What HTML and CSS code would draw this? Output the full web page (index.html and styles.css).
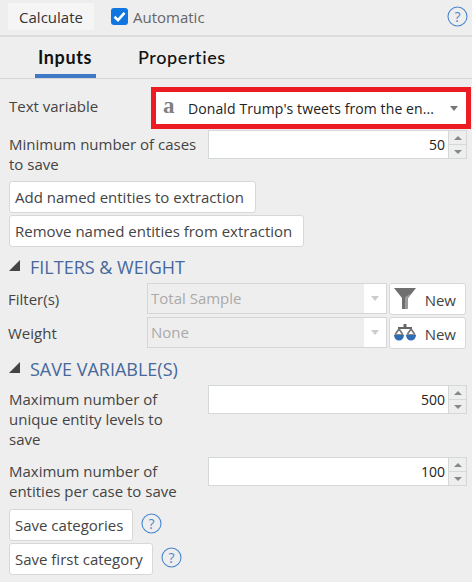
FILE: index.html
```html
<!DOCTYPE html>
<html lang="en">
<head>
    <meta charset="UTF-8">
    <title>Text Analysis Inputs</title>
    <link rel="stylesheet" href="styles.css">
</head>
<body>
    <!-- Top toolbar -->
    <div class="toolbar">
        <button class="calc">Calculate</button>
        <span class="check">
            <svg width="17" height="17" viewBox="0 0 17 17"><rect width="17" height="17" rx="3" fill="#0f75e0"/><path d="M3.5 8.8 L7 12.2 L13.5 4.8" fill="none" stroke="#fff" stroke-width="2.6"/></svg>
        </span>
        <span class="auto">Automatic</span>
        <svg class="help top-help" width="21" height="21" viewBox="0 0 21 21"><circle cx="10.5" cy="10.5" r="9.5" fill="none" stroke="#4a86d0" stroke-width="1.1"/><text x="10.5" y="15.5" class="help-mark">?</text></svg>
    </div>

    <!-- Tabs -->
    <div class="tabs">
        <div class="tab active">Inputs</div>
        <div class="tab">Properties</div>
    </div>

    <div class="panel">
        <div class="row-text">
            <label class="text-label">Text variable</label>
            <div class="red-box">
                <span class="glyph">a</span>
                <span class="var-name">Donald Trump's tweets from the en...</span>
                <span class="arrow-down"></span>
            </div>
        </div>

        <div class="num-row first-num">
            <label class="num-label">Minimum number of cases to save</label>
            <div class="spin-input">
                <div class="num-value">50</div>
                <div class="spinner"><span class="up"></span><span class="down"></span></div>
            </div>
        </div>

        <button class="btn wide-btn first-wide">Add named entities to extraction</button>
        <button class="btn wide-btn">Remove named entities from extraction</button>

        <h3 class="section"><span class="tri"></span>FILTERS &amp; WEIGHT</h3>

        <div class="combo-row">
            <label class="combo-label">Filter(s)</label>
            <div class="combo"><span class="combo-text">Total Sample</span><span class="combo-arrow"><span class="arrow-down pale"></span></span></div>
            <button class="btn new-btn">
                <svg width="22" height="22" viewBox="0 0 22 22"><path d="M0 0 H22 L14 10 V21 H8 V10 Z" fill="#6f6f6f"/><path d="M11 9 V21 H14 V10 L18 5 Z" fill="#9a9a9a"/></svg>
                <span class="new-text">New</span>
            </button>
        </div>
        <div class="combo-row">
            <label class="combo-label">Weight</label>
            <div class="combo"><span class="combo-text">None</span><span class="combo-arrow"><span class="arrow-down pale"></span></span></div>
            <button class="btn new-btn">
                <svg width="22" height="18" viewBox="0 0 22 18"><path d="M9.5 0 H12.5 V3 H18 V5 H4 V3 H9.5 Z" fill="#666"/><path d="M5 5 L1.5 10 M5 5 L8.5 10 M17 5 L13.5 10 M17 5 L20.5 10" stroke="#777" stroke-width="1.7" fill="none"/><path d="M0.5 10 H9.5 V11 H0.5 Z M12.5 10 H21.5 V11 H12.5 Z" fill="#888"/><path d="M0 11 H10 A5 5.5 0 0 1 0 11 Z M12 11 H22 A5 5.5 0 0 1 12 11 Z" fill="#2f6db5"/></svg>
                <span class="new-text">New</span>
            </button>
        </div>

        <h3 class="section"><span class="tri"></span>SAVE VARIABLE(S)</h3>

        <div class="num-row">
            <label class="num-label">Maximum number of unique entity levels to<br>save</label>
            <div class="spin-input">
                <div class="num-value">500</div>
                <div class="spinner"><span class="up"></span><span class="down"></span></div>
            </div>
        </div>
        <div class="num-row second-num">
            <label class="num-label">Maximum number of entities per case to save</label>
            <div class="spin-input">
                <div class="num-value">100</div>
                <div class="spinner"><span class="up"></span><span class="down"></span></div>
            </div>
        </div>

        <div class="btn-help first-save">
            <button class="btn save-btn">Save categories</button>
            <svg class="help" width="21" height="21" viewBox="0 0 21 21"><circle cx="10.5" cy="10.5" r="9.5" fill="none" stroke="#4a86d0" stroke-width="1.1"/><text x="10.5" y="15.5" class="help-mark">?</text></svg>
        </div>
        <div class="btn-help">
            <button class="btn save-btn">Save first category</button>
            <svg class="help" width="21" height="21" viewBox="0 0 21 21"><circle cx="10.5" cy="10.5" r="9.5" fill="none" stroke="#4a86d0" stroke-width="1.1"/><text x="10.5" y="15.5" class="help-mark">?</text></svg>
        </div>
    </div>
</body>
</html>
```

FILE: styles.css
```css
* {
    box-sizing: border-box;
}
html, body {
    height: 582px;
    overflow: hidden;
}
body {
    margin: 0;
    background-color: #eeeeee;
    font-family: "Open Sans", Arial, sans-serif;
    font-size: 15px;
    color: #444;
}
button {
    font-family: inherit;
}
.toolbar {
    height: 37px;
    display: flex;
    align-items: center;
    padding: 0 4px 2px 8px;
    border-bottom: 2px solid #dcdcdc;
}
.calc {
    width: 86px;
    height: 27px;
    border: none;
    background-color: #f5f5f5;
    font-size: 15px;
    color: #333;
    padding: 0;
}
.check {
    display: flex;
    margin-left: 17px;
}
.auto {
    margin-left: 5px;
    color: #666;
}
.help {
    display: block;
    flex: none;
}
.top-help {
    margin-left: auto;
}
.help-mark {
    font-family: "Open Sans", Arial, sans-serif;
    font-size: 14px;
    fill: #4a86d0;
    text-anchor: middle;
}
.tabs {
    height: 42px;
    display: flex;
    padding-left: 35px;
    border-bottom: 1px solid #d3d6d6;
}
.tab {
    height: 41px;
    padding: 9px 3px 0;
    margin-right: 39px;
    font-family: Lato, Arial, sans-serif;
    font-size: 18px;
    font-weight: 500;
    color: #111;
    letter-spacing: 0.6px;
}
.tab.active {
    width: 61px;
    font-weight: 700;
    border-bottom: 4px solid #3f78c4;
}
.panel {
    padding: 8px 5px 0 8px;
}
.row-text {
    display: flex;
    width: 463px;
}
.text-label {
    width: 143px;
    flex: none;
    padding: 9px 0 0 1px;
}
.red-box {
    width: 320px;
    flex: none;
    height: 42px;
    border: 5px solid #ed1c24;
    background-color: #fff;
    display: flex;
    align-items: center;
    padding-left: 7px;
    color: #222;
}
.glyph {
    width: 25px;
    font-family: "Liberation Serif", serif;
    font-weight: 700;
    font-size: 23px;
    color: #808080;
    margin-top: -4px;
}
.var-name {
    flex: 1;
    white-space: nowrap;
    font-size: 14px;
    letter-spacing: 0.1px;
}
.arrow-down {
    display: block;
    width: 0;
    height: 0;
    border-left: 4px solid transparent;
    border-right: 4px solid transparent;
    border-top: 5px solid #777;
    margin-right: 8px;
}
.arrow-down.pale {
    border-top-color: #ccc;
    margin: 0;
}
.num-row {
    display: flex;
    align-items: flex-start;
}
.first-num {
    margin-top: 1px;
}
.second-num {
    margin-top: 8px;
}
.num-label {
    width: 200px;
    flex: none;
    padding: 4px 0 0 1px;
    line-height: 20px;
}
.spin-input {
    width: 259px;
    flex: none;
    height: 29px;
    display: flex;
    border: 1px solid #d5d8d8;
    background-color: #fff;
}
.num-value {
    flex: 1;
    text-align: right;
    padding-right: 3px;
    line-height: 27px;
    font-size: 14px;
    color: #222;
}
.spinner {
    width: 18px;
    display: flex;
    flex-direction: column;
    background-color: #eeeeee;
    border-left: 1px solid #d5d8d8;
}
.spinner span {
    flex: 1;
    display: flex;
    align-items: center;
    justify-content: center;
}
.spinner .up {
    border-bottom: 1px solid #d5d8d8;
}
.spinner .up::before, .spinner .down::before {
    content: "";
    width: 0;
    height: 0;
    border-left: 4px solid transparent;
    border-right: 4px solid transparent;
}
.spinner .up::before {
    border-bottom: 4px solid #888;
}
.spinner .down::before {
    border-top: 4px solid #888;
}
.btn {
    display: block;
    height: 32px;
    padding: 0 5px;
    background-color: #fff;
    border: 1px solid #d8d8d8;
    border-radius: 3px;
    font-size: 15px;
    color: #444;
    white-space: nowrap;
}
.wide-btn {
    margin: 0 0 2px 1px;
    padding-right: 11px;
}
.first-wide {
    margin-top: 7px;
}
.section {
    margin: 9px 0 5px;
    font-size: 18px;
    font-weight: 400;
    color: #46689c;
    display: flex;
    align-items: center;
    line-height: 22px;
}
.tri {
    width: 0;
    height: 0;
    margin: -3px 10px 0 1px;
    border-left: 11px solid transparent;
    border-bottom: 11px solid #444;
}
.combo-row {
    display: flex;
    align-items: flex-start;
    margin-bottom: 2px;
    width: 463px;
}
.combo-label {
    width: 139px;
    flex: none;
    padding-top: 6px;
}
.combo {
    width: 240px;
    flex: none;
    height: 31px;
    display: flex;
    border: 1px solid #d5d5d5;
    margin-right: 2px;
}
.combo-text {
    flex: 1;
    padding-left: 3px;
    line-height: 28px;
    color: #aaa;
}
.combo-arrow {
    width: 22px;
    background-color: #fff;
    display: flex;
    align-items: center;
    justify-content: center;
}
.new-btn {
    width: 77px;
    flex: none;
    display: flex;
    align-items: center;
    justify-content: space-between;
    padding: 0 9px 0 4px;
}
.new-text {
    padding-top: 2px;
}
.btn-help {
    display: flex;
    align-items: center;
    margin: 0 0 2px 1px;
}
.first-save {
    margin-top: 8px;
}
.save-btn {
    padding-right: 9px;
}
.btn-help .help {
    margin-left: 8px;
    margin-top: -3px;
}
```
